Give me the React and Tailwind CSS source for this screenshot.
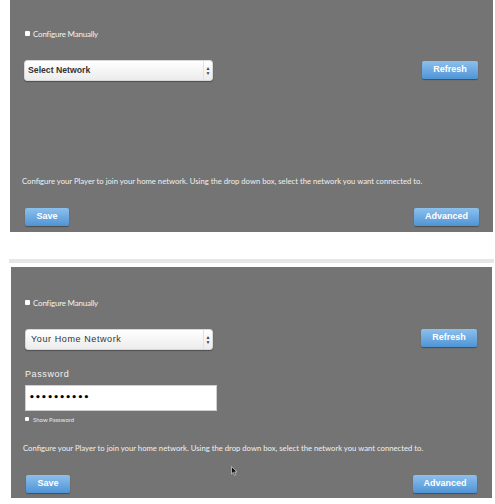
import React from 'react';

const panelFont = { fontFamily: 'Lato, "Open Sans", sans-serif' };

function Check({ small }) {
    return (
        <span className={`inline-block bg-white rounded-[1px] ${small ? 'w-[4px] h-[4px]' : 'w-[5px] h-[5px]'}`}></span>
    );
}

function BlueButton({ children, width }) {
    return (
        <button
            className={`${width} h-[18px] rounded-[2px] bg-gradient-to-b from-[#8cc0ec] to-[#4f94d6] shadow-[0_1px_1px_rgba(0,0,0,0.35)] text-white text-[9px] font-bold flex items-center justify-center`}
            style={{ fontFamily: '"Liberation Sans", Arial, sans-serif' }}
        >
            {children}
        </button>
    );
}

function SelectBox({ label, width, spaced }) {
    return (
        <div
            className={`${width} h-[21px] rounded-[3px] bg-gradient-to-b from-white to-[#ececec] border border-[#d8d8d8] shadow-[0_1px_1px_rgba(0,0,0,0.3)] flex items-center`}
        >
            <span
                className={`flex-1 text-[#333] ${spaced ? 'text-[9px] tracking-[0.6px] pl-[5px]' : 'text-[8.7px] font-bold pl-[3px]'}`}
                style={{ fontFamily: '"Liberation Sans", Arial, sans-serif' }}
            >
                {label}
            </span>
            <span className="h-full w-[9px] border-l border-[#e2e2e2] flex flex-col items-center justify-center text-[#444] text-[5px] leading-[5px]">
                <span>▲</span>
                <span>▼</span>
            </span>
        </div>
    );
}

export default function App() {
    return (
        <div className="w-[495px] h-[504px] bg-white relative overflow-hidden" style={panelFont}>
            {/* first panel */}
            <div className="ml-[10px] w-[483px] h-[232px] bg-[#747474] flex flex-col">
                <div className="mt-[29px] h-[9px] pl-[15px] flex items-center gap-[3px]">
                    <Check />
                    <span className="text-[#f2f2f2] text-[8px] tracking-[-0.2px]">Configure Manually</span>
                </div>
                <div className="mt-[22px] pl-[14px] pr-[15px] flex items-start justify-between">
                    <SelectBox label="Select Network" width="w-[189px]" />
                    <div className="mt-px">
                        <BlueButton width="w-[56px]">Refresh</BlueButton>
                    </div>
                </div>
                <p className="mt-[95px] h-[10px] leading-[10px] pl-[12px] text-[#f0f0f0] text-[7.7px] whitespace-nowrap">
                    Configure your Player to join your home network. Using the drop down box, select the network you want connected to.
                </p>
                <div className="mt-[22px] pl-[15px] pr-[14px] flex justify-between">
                    <BlueButton width="w-[44px]">Save</BlueButton>
                    <BlueButton width="w-[65px]">Advanced</BlueButton>
                </div>
            </div>

            {/* separator */}
            <div className="mt-[27px] ml-[9px] w-[485px] h-[4px] bg-[#e6e6e6]"></div>

            {/* second panel */}
            <div className="mt-[4px] ml-[11px] w-[481px] h-[231px] bg-[#747474] flex flex-col relative">
                <div className="mt-[31px] h-[9px] pl-[14px] flex items-center gap-[3px]">
                    <Check />
                    <span className="text-[#f2f2f2] text-[8px] tracking-[-0.2px]">Configure Manually</span>
                </div>
                <div className="mt-[22px] pl-[14px] pr-[15px] flex items-start justify-between">
                    <SelectBox label="Your Home Network" width="w-[188px]" spaced />
                    <BlueButton width="w-[56px]">Refresh</BlueButton>
                </div>
                <div
                    className="mt-[19px] h-[10px] leading-[10px] pl-[14px] text-[#f2f2f2] text-[9px] tracking-[0.6px]"
                    style={{ fontFamily: '"Liberation Sans", Arial, sans-serif' }}
                >
                    Password
                </div>
                <div className="mt-[6px] ml-[14px] w-[192px] h-[26px] bg-white border border-[#cfcfcf] flex items-center pl-[3px]">
                    <span className="text-black text-[9px] font-bold tracking-[0.3px]" style={{ fontFamily: '"DejaVu Sans", sans-serif' }}>••••••••••</span>
                </div>
                <div className="mt-[4px] h-[8px] pl-[14px] flex items-center gap-[4px]">
                    <Check small />
                    <span className="text-[#e8e8e8] text-[6px]">Show Password</span>
                </div>
                <p className="mt-[20px] h-[10px] leading-[10px] pl-[12px] text-[#f0f0f0] text-[7.7px] whitespace-nowrap">
                    Configure your Player to join your home network. Using the drop down box, select the network you want connected to.
                </p>
                <div className="mt-[22px] pl-[15px] pr-[15px] flex justify-between">
                    <BlueButton width="w-[44px]">Save</BlueButton>
                    <BlueButton width="w-[64px]">Advanced</BlueButton>
                </div>

                {/* mouse cursor */}
                <svg className="absolute left-[220px] top-[199px]" width="7" height="10" viewBox="0 0 7 10">
                    <path d="M0.5 0.5 L0.5 8 L2.3 6.3 L3.6 9.3 L4.8 8.8 L3.6 5.9 L6 5.9 Z" fill="#111" stroke="#eee" strokeWidth="0.6" />
                </svg>
            </div>
        </div>
    );
}
